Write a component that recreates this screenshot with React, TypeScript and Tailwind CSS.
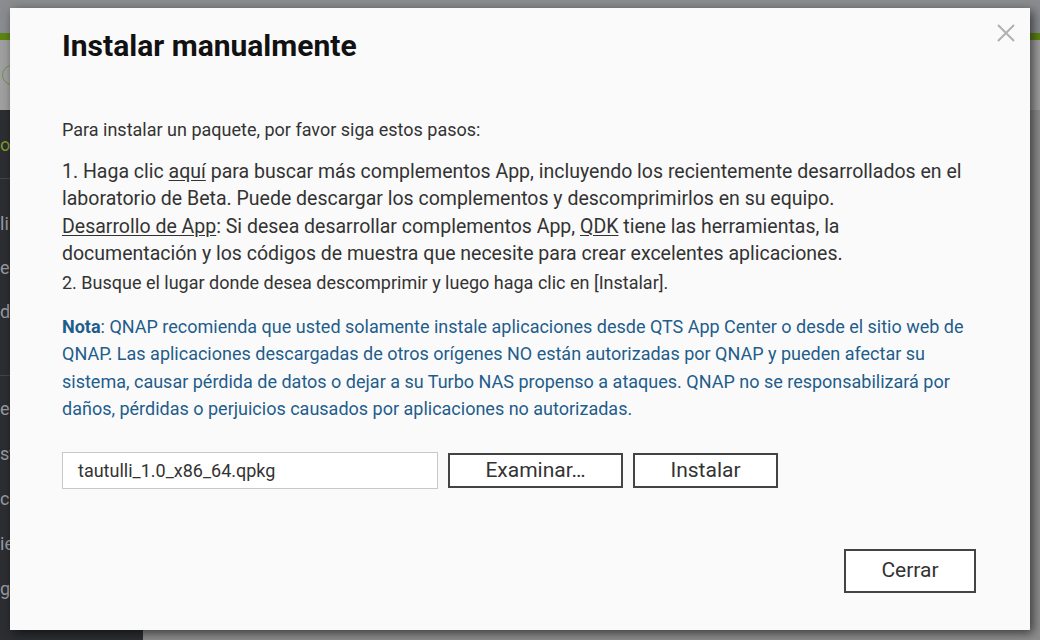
const sideItems = [
  { t: "or", green: true },
  { t: "li" },
  { t: "er" },
  { t: "do" },
];
const sideItems2 = ["e", "st", "c", "ie", "ga"];

function Background() {
  return (
    <div className="flex h-[640px] w-[1040px] flex-col bg-[#8e8e8e]">
      <div className="h-[33px] bg-[#8a8c90]" />
      <div className="h-[7px] bg-[#5b8512]" />
      <div className="flex h-[70px] items-center bg-[#a0a0a0] px-[2px]">
        <span className="size-[20px] rounded-full border border-[#6f8f4a]" />
      </div>
      <div className="flex flex-1">
        <div className="flex w-[143px] flex-col bg-[#2c2e32] text-[18px] text-[#9a9ca0]">
          <div className="flex h-[68px] items-center text-[#7f9a2e]">{sideItems[0].t}</div>
          <div className="border-t border-[#44464a] pt-[22px]">
            {sideItems.slice(1).map((s) => (
              <div key={s.t} className="flex h-[44px] items-center">{s.t}</div>
            ))}
          </div>
          <div className="mt-[42px] border-t border-[#44464a] pt-[10px]">
            {sideItems2.map((s) => (
              <div key={s} className="flex h-[45px] items-center">{s}</div>
            ))}
          </div>
        </div>
        <div className="flex-1" />
      </div>
    </div>
  );
}

export default function App() {
  return (
    <div className="relative h-[640px] w-[1040px] overflow-hidden font-['Roboto',sans-serif]">
      <Background />

      <div className="absolute left-[10px] top-[8px] flex h-[622px] w-[1020px] flex-col bg-[#fafafa] pb-[37px] pl-[52px] pr-[54px] pt-[20px] text-[#333] shadow-[3px_3px_10px_rgba(0,0,0,0.6)]">
        <button className="absolute right-[15px] top-[16px] text-[#b0b0b0]">
          <svg width="18" height="18" viewBox="0 0 18 18" stroke="currentColor" strokeWidth="2">
            <path d="M1 1 L17 17 M17 1 L1 17" />
          </svg>
        </button>

        <h1 className="text-[30px] font-bold leading-[36px] text-[#111]">Instalar manualmente</h1>

        <p className="mt-[54px] text-[18px] leading-[24px]">Para instalar un paquete, por favor siga estos pasos:</p>

        <div className="mt-[16px] max-w-[910px] text-[19.5px] leading-[27.3px]">
          1. Haga clic <span className="underline underline-offset-2">aquí</span> para buscar más complementos App, incluyendo los recientemente desarrollados en el laboratorio de Beta. Puede descargar los complementos y descomprimirlos en su equipo.
          <br />
          <span className="underline underline-offset-2">Desarrollo de App</span>: Si desea desarrollar complementos App, <span className="underline underline-offset-2">QDK</span> tiene las herramientas, la documentación y los códigos de muestra que necesite para crear excelentes aplicaciones.
        </div>
        <div className="mt-[2px] text-[18px] leading-[27px]">
          2. Busque el lugar donde desea descomprimir y luego haga clic en [Instalar].
        </div>

        <p className="mt-[17px] text-[18px] leading-[27.3px] text-[#1f5d8c]">
          <span className="font-bold">Nota</span>: QNAP recomienda que usted solamente instale aplicaciones desde QTS App Center o desde el sitio web de QNAP. Las aplicaciones descargadas de otros orígenes NO están autorizadas por QNAP y pueden afectar su sistema, causar pérdida de datos o dejar a su Turbo NAS propenso a ataques. QNAP no se responsabilizará por daños, pérdidas o perjuicios causados por aplicaciones no autorizadas.
        </p>

        <div className="mt-[30px] flex items-center gap-[10px]">
          <div className="flex h-[37px] w-[376px] items-center border border-[#c8c8c8] bg-white px-[15px] text-[18px]">
            tautulli_1.0_x86_64.qpkg
          </div>
          <button className="h-[35px] w-[175px] border-2 border-[#444] bg-white text-[21px]">Examinar…</button>
          <button className="h-[35px] w-[145px] border-2 border-[#444] bg-white text-[21px]">Instalar</button>
        </div>

        <div className="mt-auto flex justify-end">
          <button className="h-[44px] w-[132px] border-2 border-[#444] bg-white text-[21px]">Cerrar</button>
        </div>
      </div>
    </div>
  );
}
